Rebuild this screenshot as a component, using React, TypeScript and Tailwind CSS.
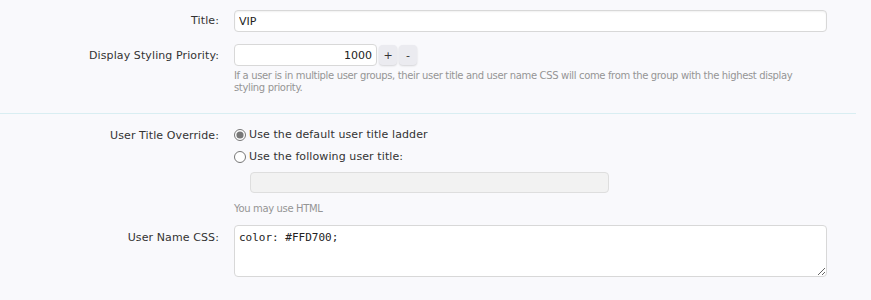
import { useState } from 'react'

const label = "w-[234px] shrink-0 pr-[15px] text-right text-[11px] tracking-[0.1px] text-[#333] font-['DejaVu_Sans',sans-serif]"
const hint = "text-[10px] leading-[12px] tracking-[-0.35px] text-[#959595] font-['DejaVu_Sans',sans-serif]"
const radio = 'flex h-[22px] items-center gap-[3px] text-[11px] tracking-[0.1px] text-[#333]'

export default function App() {
  const [override, setOverride] = useState('default')
  const [priority, setPriority] = useState(1000)

  return (
    <div className="min-h-[300px] w-[871px] bg-[#f9f9fc] font-['DejaVu_Sans',sans-serif]">
      <div className="pt-[10px] pr-[44px]">
        <div className="flex items-center">
          <label className={label}>Title:</label>
          <input
            defaultValue="VIP"
            className="h-[22px] flex-1 rounded-[4px] border border-[#d8d8d8] bg-white px-[4px] text-[11px] text-[#222] outline-none shadow-[inset_0_1px_2px_rgba(0,0,0,0.06)]"
          />
        </div>

        <div className="mt-[12px] flex">
          <label className={label + ' pt-[4px]'}>Display Styling Priority:</label>
          <div className="flex-1">
            <div className="flex items-center gap-[2px]">
              <input
                value={priority}
                onChange={e => setPriority(Number(e.target.value) || 0)}
                className="h-[22px] w-[143px] rounded-[4px] border border-[#d8d8d8] bg-white px-[4px] text-right text-[11px] text-[#222] outline-none"
              />
              <button
                onClick={() => setPriority(p => p + 1)}
                className="h-[20px] w-[18px] rounded-[4px] bg-[#ebebf0] text-[11px] leading-none text-[#333] shadow-[0_1px_2px_rgba(0,0,0,0.15)]"
              >+</button>
              <button
                onClick={() => setPriority(p => p - 1)}
                className="h-[20px] w-[18px] rounded-[4px] bg-[#ebebf0] text-[11px] leading-none text-[#333] shadow-[0_1px_2px_rgba(0,0,0,0.15)]"
              >-</button>
            </div>
            <p className={hint + ' mt-[4px] pr-[20px]'}>
              If a user is in multiple user groups, their user title and user name CSS will come from the group with the highest display styling priority.
            </p>
          </div>
        </div>
      </div>

      <div className="mt-[19px] mr-[15px] h-px bg-[#d9eef2]" />

      <div className="pt-[10px] pr-[44px]">
        <div className="flex">
          <label className={label + ' pt-[4px]'}>User Title Override:</label>
          <div className="flex-1">
            <label className={radio}>
              <input
                type="radio"
                name="override"
                checked={override === 'default'}
                onChange={() => setOverride('default')}
                className="m-0 h-[12px] w-[12px] accent-[#777]"
              />
              Use the default user title ladder
            </label>
            <label className={radio}>
              <input
                type="radio"
                name="override"
                checked={override === 'custom'}
                onChange={() => setOverride('custom')}
                className="m-0 h-[12px] w-[12px] accent-[#777]"
              />
              Use the following user title:
            </label>
            <input
              disabled={override !== 'custom'}
              className="mt-[4px] ml-[16px] h-[21px] w-[359px] rounded-[4px] border border-[#dedede] bg-[#f2f2f2] px-[4px] text-[11px] outline-none"
            />
            <p className={hint + ' mt-[10px]'}>You may use HTML</p>
          </div>
        </div>

        <div className="mt-[10px] flex">
          <label className={label + ' pt-[5px]'}>User Name CSS:</label>
          <textarea
            defaultValue="color: #FFD700;"
            className="h-[52px] flex-1 rounded-[4px] border border-[#d8d8d8] bg-white px-[4px] py-[4px] font-['DejaVu_Sans_Mono',monospace] text-[11px] text-[#222] outline-none"
          />
        </div>
      </div>
    </div>
  )
}
